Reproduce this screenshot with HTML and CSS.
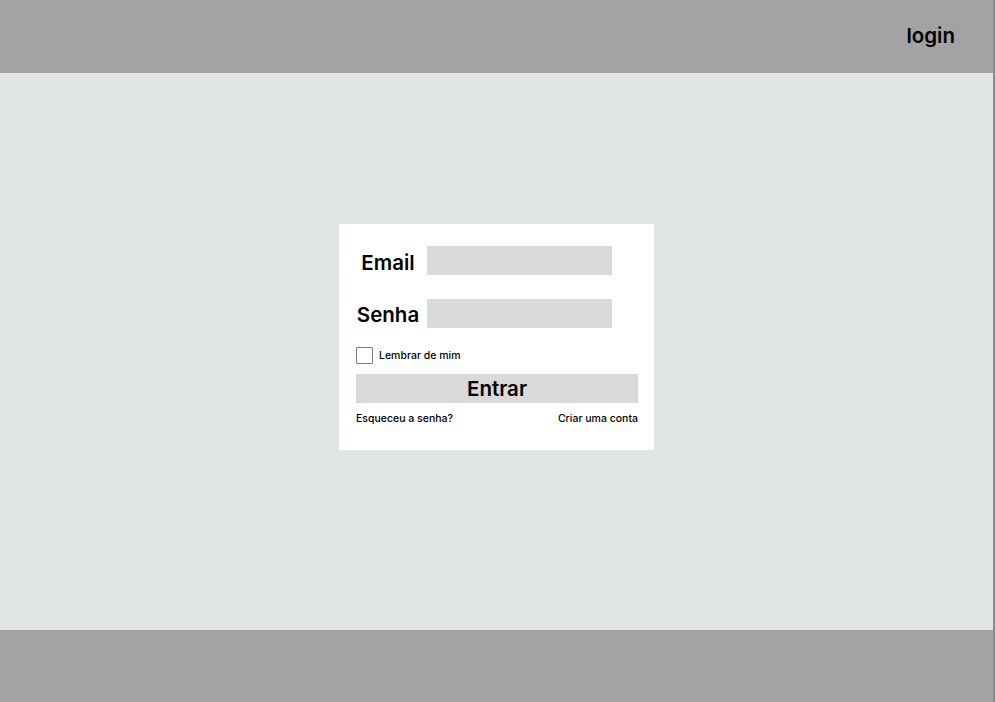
FILE: index.html
```html
<!DOCTYPE html>
<html>
<head>
    <title>Login</title>
    <link rel="stylesheet" href="styles.css">
</head>
<body>
    <div class="page">
        <header class="topbar">
            <span class="topbar-title">login</span>
        </header>

        <main class="content">
            <form class="login-card">
                <div class="field">
                    <label for="email">Email</label>
                    <input type="email" id="email" class="text-input">
                </div>
                <div class="field">
                    <label for="senha">Senha</label>
                    <input type="password" id="senha" class="text-input">
                </div>
                <label class="remember">
                    <span class="box"></span>
                    Lembrar de mim
                </label>
                <button type="button" class="submit-btn">Entrar</button>
                <div class="links">
                    <a href="#">Esqueceu a senha?</a>
                    <a href="#">Criar uma conta</a>
                </div>
            </form>
        </main>

        <footer class="bottombar"></footer>
    </div>
</body>
</html>
```

FILE: styles.css
```css
body {
    margin: 0;
    font-family: Inter, "Noto Sans", Arial, sans-serif;
    background: #a3a3a3;
    overflow: hidden;
}
.page {
    width: 993px;
    border-right: 2px solid #8a8a8a;
}
.topbar {
    height: 73px;
    background: #a3a3a3;
    display: flex;
    align-items: center;
    justify-content: flex-end;
    padding-right: 38px;
}
.topbar-title {
    font-size: 20.5px;
    font-weight: 600;
    color: #000;
    margin-top: -2px;
}
.content {
    height: 557px;
    box-sizing: border-box;
    padding-top: 151px;
    background: #e1e5e6;
    display: flex;
    justify-content: center;
    align-items: flex-start;
}
.login-card {
    width: 315px;
    height: 226px;
    box-sizing: border-box;
    background: #fff;
    padding: 22px 16px 0 17px;
}
.field {
    display: grid;
    grid-template-columns: 64px 185px;
    grid-template-rows: 29px;
    column-gap: 7px;
    align-items: center;
    margin-bottom: 24px;
}
.field + .field {
    margin-bottom: 19px;
}
.field label {
    text-align: center;
    font-size: 20.5px;
    line-height: 24px;
    font-weight: 600;
    color: #000;
    padding-top: 4px;
}
.field + .field label {
    padding-top: 2px;
}
.text-input {
    height: 29px;
    border: none;
    background: #d9d9d9;
    padding: 0;
    margin: 0;
    outline: none;
}
.remember {
    display: flex;
    align-items: center;
    gap: 6px;
    font-size: 10.5px;
    font-weight: 500;
    color: #000;
    height: 17px;
}
.box {
    width: 15px;
    height: 15px;
    border: 1px solid #7d7d7d;
    border-radius: 1px;
}
.submit-btn {
    display: block;
    width: 282px;
    height: 29px;
    margin-top: 10px;
    border: none;
    background: #d9d9d9;
    font-family: inherit;
    font-size: 20.5px;
    font-weight: 600;
    color: #000;
    padding: 0;
}
.links {
    width: 282px;
    display: flex;
    justify-content: space-between;
    margin-top: 9px;
    font-size: 10.5px;
    font-weight: 500;
}
.links a {
    color: #000;
    text-decoration: none;
}
.bottombar {
    height: 72px;
    background: #a3a3a3;
}
```
